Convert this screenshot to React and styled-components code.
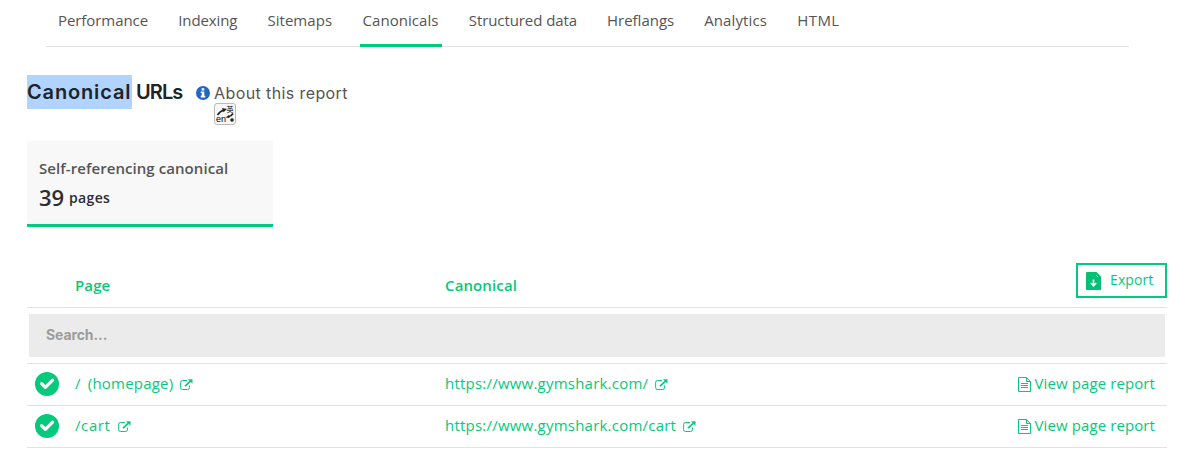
import React from "react";
import styled, { createGlobalStyle } from "styled-components";

const tabs = [
  { name: "Performance", width: 90, track: -0.07 },
  { name: "Indexing", width: 59, track: -0.1 },
  { name: "Sitemaps", width: 65, track: 0.05 },
  { name: "Canonicals", width: 76, track: 0.05, active: true },
  { name: "Structured data", width: 108, track: -0.08 },
  { name: "Hreflangs", width: 67, track: 0 },
  { name: "Analytics", width: 63, track: 0.12 },
  { name: "HTML", width: 43, track: 0.4 },
];

const rows = [
  { page: "/ (homepage)", canonical: "https://www.gymshark.com/" },
  { page: "/cart", canonical: "https://www.gymshark.com/cart" },
];

const InfoIcon = () => (
  <svg width="14" height="14" viewBox="0 0 14 14">
    <circle cx="7" cy="7" r="7" fill="#2266c4" />
    <path d="M5.6 2.200h2.700v2.200H5.600zM4.700 5.400h3.600v4.400h1v1.700H4.700V9.800h1V7.100h-1z" fill="#fff" />
  </svg>
);

const TranslateIcon = () => (
  <svg width="20" height="20" viewBox="0 0 20 20">
    <path d="M2.500 11C4 8.500 6 6.700 9 5.900M18 9.500c-1 1.800-2.500 2.800-5 3.500" fill="none" stroke="#222" strokeWidth="1.600" />
    <path d="M7 4l5 1-3.500 3.200zM14 11l-3.500 2.500 3.800.6z" fill="#222" />
    <text x="1" y="18.300" fontSize="9">en</text>
    <text x="11.500" y="7.500" fontSize="7">英</text>
    <circle cx="17" cy="16" r="1.800" fill="#222" />
  </svg>
);

const CheckIcon = () => (
  <svg width="24" height="24" viewBox="0 0 24 24">
    <circle cx="12" cy="12" r="12" fill="#05c97b" />
    <path d="M6.600 11.600l3.800 3.700 7.200-7.100" fill="none" stroke="#fff" strokeWidth="3.200" strokeLinecap="round" strokeLinejoin="round" />
  </svg>
);

const ExternalIcon = () => (
  <svg width="13" height="11" viewBox="0 0 13 11">
    <path d="M7 1.500H2.500Q.6 1.500.6 3.400v5.100q0 2 1.900 2h5.200q1.800 0 1.800-2V6.500" fill="none" stroke="#05c97b" strokeWidth="1" />
    <path d="M5 7.200l5.500-5.100" stroke="#05c97b" strokeWidth="1.600" />
    <path d="M8 .2h4.500v4.600z" fill="#05c97b" />
  </svg>
);

const ReportIcon = () => (
  <svg width="13" height="15" viewBox="0 0 13 15">
    <path d="M.5.5h8l4 4v10H.5zM8.500.5v4h4" fill="none" stroke="#05c97b" />
    <path d="M3 6.500h7M3 8.500h7M3 10.500h7" stroke="#05c97b" />
  </svg>
);

const ExportIcon = () => (
  <svg width="15" height="18" viewBox="0 0 15 18">
    <path d="M1 0h9.500l4.500 4.500V18H1Q0 18 0 17V1Q0 0 1 0z" fill="#05bf75" />
    <path d="M7.500 7.500v6M4.800 11l2.700 2.800 2.700-2.800" fill="none" stroke="#fff" strokeWidth="1.600" />
    <path d="M10.500 3.500l1.300 1.300" stroke="#fff" strokeWidth=".8" />
  </svg>
);

const App = () => {
  return (
    <Page>
      <GlobalStyle />
      <Tabs>
        {tabs.map((tab) => (
          <Tab key={tab.name} $active={tab.active} $width={tab.width} $track={tab.track}>
            {tab.name}
          </Tab>
        ))}
      </Tabs>

      <Heading>
        <Title>
          <Selected>Canonical</Selected>
          <TitleRest>URLs</TitleRest>
        </Title>
        <About>
          <InfoIcon />
          <AboutText>
            About this report
            <Translate>
              <TranslateIcon />
            </Translate>
          </AboutText>
        </About>
      </Heading>

      <Card>
        <CardLabel>Self-referencing canonical</CardLabel>
        <CardValue>
          <Count>39</Count>
          <Unit>pages</Unit>
        </CardValue>
      </Card>

      <Table>
        <HeaderRow>
          <HeaderCell>Page</HeaderCell>
          <HeaderCell>Canonical</HeaderCell>
          <ExportButton>
            <ExportIcon />
            <ExportLabel>Export</ExportLabel>
          </ExportButton>
        </HeaderRow>
        <SearchRow>
          <Search placeholder="Search..." />
        </SearchRow>
        {rows.map((row) => (
          <Row key={row.page}>
            <CheckIcon />
            <CellLink $track={row.page === "/cart" ? 0.6 : 0.2} $space={3}>
              <LinkText>{row.page}</LinkText>
              <ExternalIcon />
            </CellLink>
            <CellLink $track={0.22}>
              <LinkText>{row.canonical}</LinkText>
              <ExternalIcon />
            </CellLink>
            <ReportLink>
              <ReportIcon />
              <LinkText>View page report</LinkText>
            </ReportLink>
          </Row>
        ))}
      </Table>
    </Page>
  );
};

export default App;

const GlobalStyle = createGlobalStyle`
  * {
    box-sizing: border-box;
  }
  body {
    margin: 0;
    background: #fff;
    overflow: hidden;
    font-family: "Open Sans", sans-serif;
    font-size: 15px;
    color: #555;
  }
  svg {
    display: block;
    flex: none;
  }
`;

const Page = styled.div`
  width: 1188px;
  height: 451px;
  padding: 0 21px 0 27px;
`;

const Tabs = styled.nav`
  display: flex;
  gap: 24.2px;
  width: 1083px;
  height: 47px;
  margin-left: 19px;
  padding-left: 9px;
  border-bottom: 1px solid #e2e2e2;
`;

const Tab = styled.a`
  flex: none;
  width: ${(props) => props.$width + 6}px;
  height: 47px;
  padding: 10px 0 0 3px;
  line-height: 20px;
  white-space: nowrap;
  letter-spacing: ${(props) => props.$track}px;
  border-bottom: 3px solid ${(props) => (props.$active ? "#05c97b" : "transparent")};
`;

const Heading = styled.div`
  display: flex;
  height: 34px;
  margin-top: 28px;
`;

const Title = styled.h1`
  display: flex;
  margin: 0;
  font: 600 20px/34px Inter, sans-serif;
  color: #202326;
`;

const Selected = styled.span`
  width: 105px;
  letter-spacing: 0.85px;
  background: #b0d4ff;
`;

const TitleRest = styled.span`
  width: 64px;
  padding-left: 4px;
  letter-spacing: -0.9px;
`;

const About = styled.div`
  display: flex;
  align-items: center;
  gap: 4px;
  padding-top: 2px;
`;

const AboutText = styled.span`
  position: relative;
  font: 400 16px/24px Inter, sans-serif;
  letter-spacing: 0.4px;
`;

const Translate = styled.span`
  position: absolute;
  top: 22px;
  left: 0;
  width: 22px;
  height: 22px;
  background: #f8f8f8;
  border: 1px solid #bbb;
  border-radius: 3px;
  font-family: "Liberation Sans", "Noto Sans CJK SC", sans-serif;
  letter-spacing: 0;
`;

const Card = styled.div`
  width: 246px;
  height: 86px;
  margin-top: 32px;
  padding: 17px 12px 0;
  background: #f8f8f8;
  border-bottom: 3px solid #05c97b;
`;

const CardLabel = styled.div`
  font-weight: 600;
  line-height: 20px;
  white-space: nowrap;
  letter-spacing: 0.07px;
`;

const CardValue = styled.div`
  display: flex;
  align-items: center;
  height: 30px;
  margin-top: 4px;
  color: #2d2d32;
  font-weight: 600;
`;

const Count = styled.span`
  width: 30px;
  font-size: 22px;
  line-height: 30px;
`;

const Unit = styled.span`
  font-size: 14px;
  letter-spacing: 0.35px;
`;

const Table = styled.div`
  width: 1140px;
  margin-top: 36px;
`;

const HeaderRow = styled.div`
  display: grid;
  grid-template-columns: 370px 1fr 91px;
  height: 45px;
  padding-left: 48px;
  border-bottom: 1px solid #e2e2e2;
`;

const HeaderCell = styled.div`
  padding-top: 12px;
  font-weight: 600;
  line-height: 20px;
  letter-spacing: 0.12px;
  color: #05c97b;
`;

const ExportButton = styled.button`
  display: flex;
  align-items: center;
  gap: 9px;
  height: 35px;
  padding: 0 0 0 8px;
  font: 500 14px "Open Sans", sans-serif;
  letter-spacing: 0.1px;
  color: #05c97b;
  background: #fff;
  border: 2px solid #05c97b;
`;

const ExportLabel = styled.span`
  padding-bottom: 2px;
`;

const SearchRow = styled.div`
  height: 56px;
  padding: 6px 2px;
  border-bottom: 1px solid #e2e2e2;
`;

const Search = styled.input`
  display: block;
  width: 100%;
  height: 43px;
  padding: 0 17px 2px;
  font: 700 14px Inter, sans-serif;
  letter-spacing: -0.1px;
  background: #ebebeb;
  border: 0;
  &::placeholder {
    color: #9c9c9c;
    opacity: 1;
  }
`;

const Row = styled.div`
  display: grid;
  grid-template-columns: 40px 370px 1fr auto;
  align-items: center;
  height: 42px;
  padding: 0 12px 1px 8px;
  color: #05c97b;
  border-bottom: 1px solid #e2e2e2;
`;

const CellLink = styled.a`
  display: flex;
  align-items: center;
  gap: 7px;
  letter-spacing: ${(props) => props.$track}px;
  word-spacing: ${(props) => props.$space || 0}px;
`;

const LinkText = styled.span`
  line-height: 20px;
  padding-bottom: 2px;
`;

const ReportLink = styled.a`
  display: flex;
  align-items: center;
  gap: 4px;
  letter-spacing: 0.1px;
`;
